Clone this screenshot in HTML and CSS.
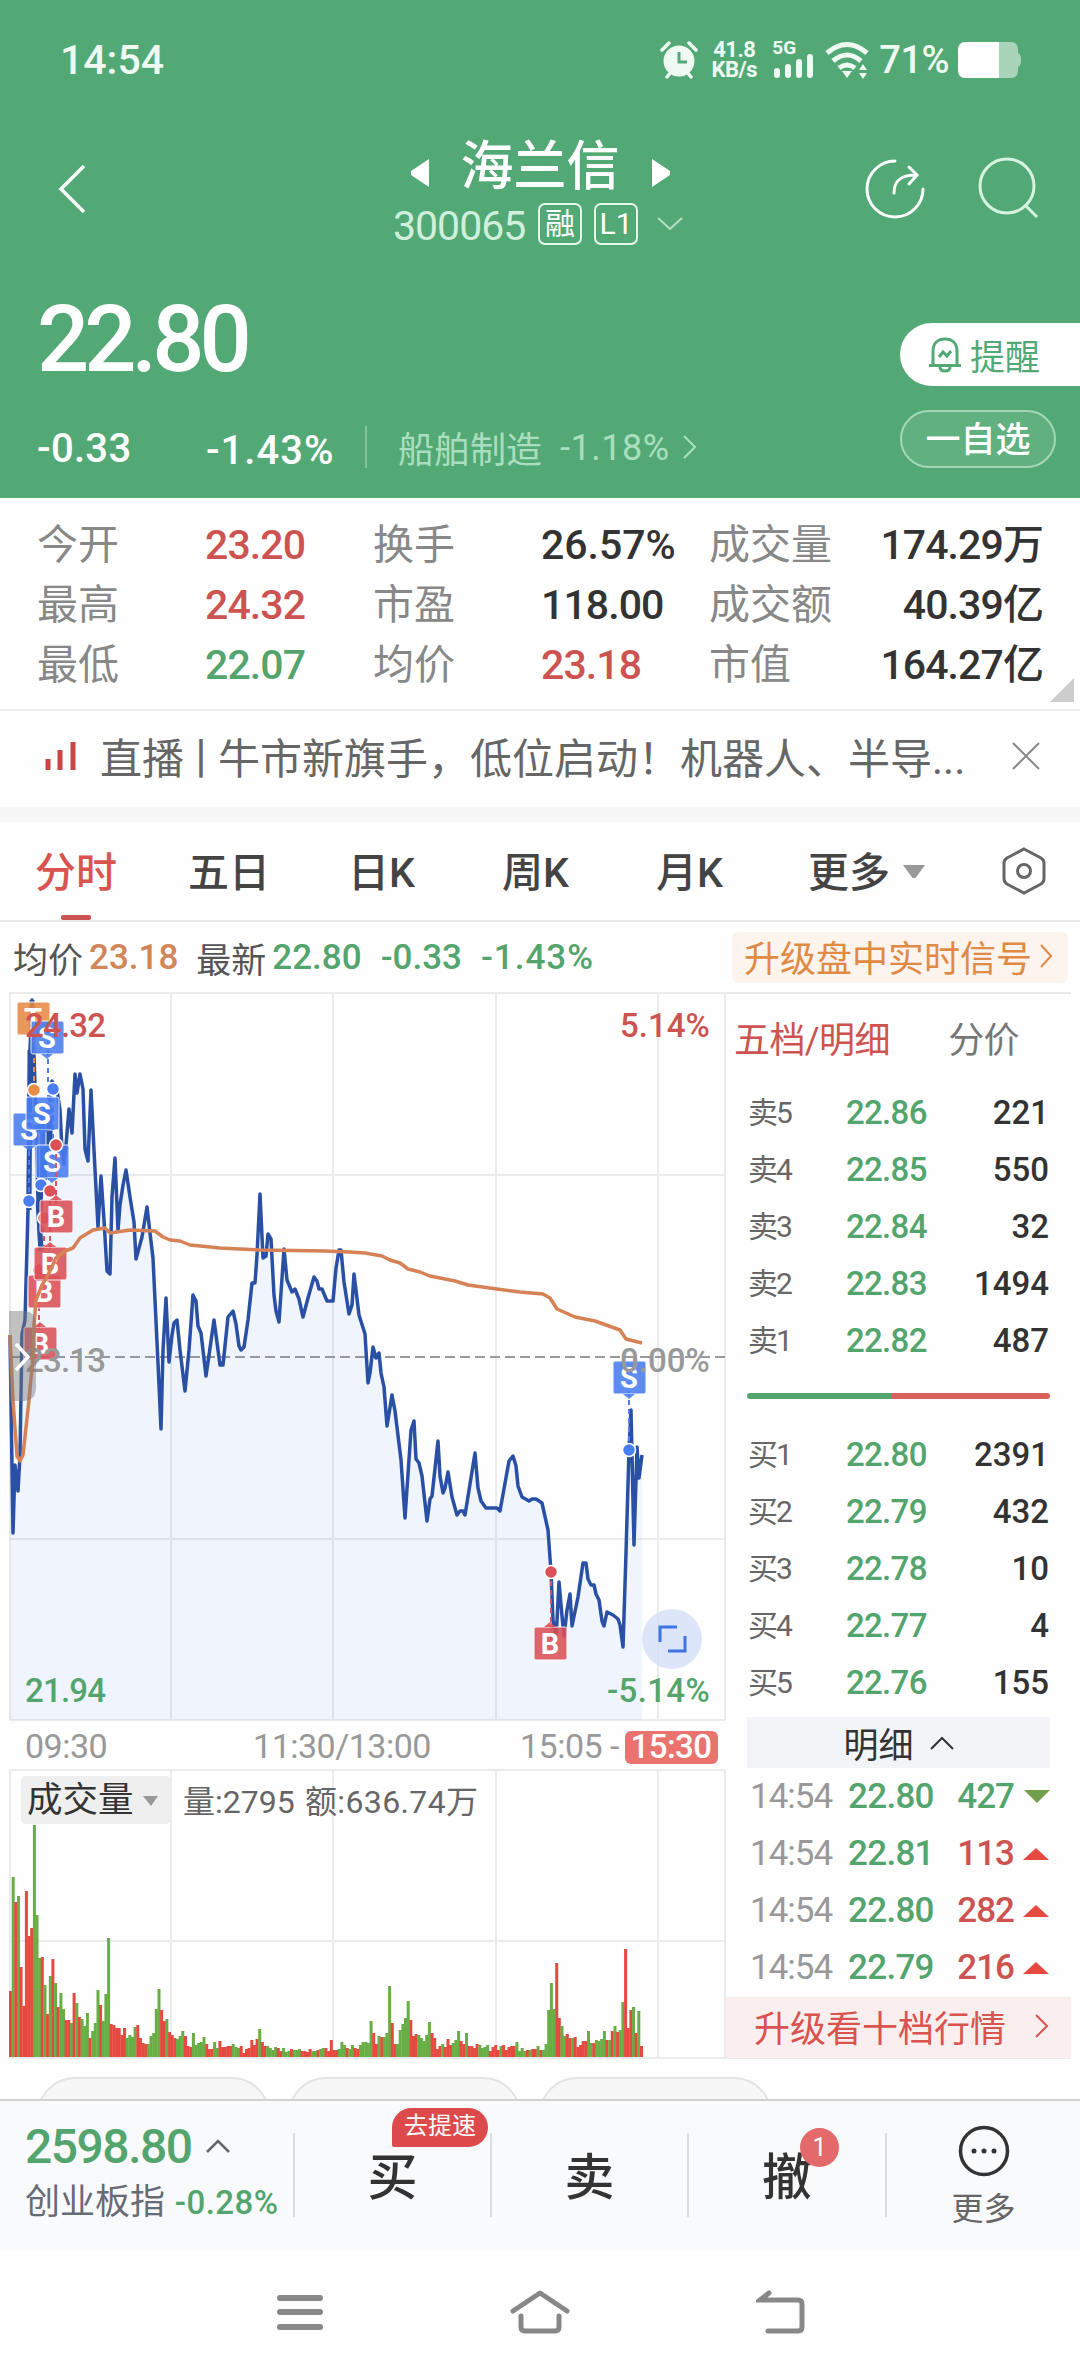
FILE: index.html
```html
<!DOCTYPE html>
<html lang="zh-CN">
<head>
    <meta charset="UTF-8">
    <title>海兰信 300065</title>
    <link rel="stylesheet" href="styles.css">
</head>
<body>
    <header class="header">
        <div class="status">
            <span class="clock">14:54</span>
            <div class="status-right">
                <svg class="alarm" width="38" height="38" viewBox="0 0 38 38">
                    <circle cx="19" cy="20" r="15.5" fill="#eefaf2"/>
                    <path d="M2 9l7-7M36 9l-7-7M7 36l4-5M31 36l-4-5" stroke="#eefaf2" stroke-width="3.5" stroke-linecap="round"/>
                    <path d="M19 11v10h8" fill="none" stroke="#53a975" stroke-width="3"/>
                </svg>
                <div class="speed"><span>41.8</span><span>KB/s</span></div>
                <div class="signal">
                    <span>5G</span>
                    <svg width="42" height="26" viewBox="0 0 42 26" stroke="#eefaf2" stroke-width="6" stroke-linecap="round">
                        <path d="M4 18v4M15 14v8M26 9v13M37 4v18"/>
                    </svg>
                </div>
                <svg class="wifi" width="44" height="38" viewBox="0 0 44 38" fill="none" stroke="#eefaf2" stroke-width="5">
                    <path d="M2 12q20-17 40 0M8 20q14-12 28 0M14 27q8-6 16 0"/>
                    <path d="M17 30h10l-5 7zM34 29l4-6 4 6zM34 32l4 6 4-6z" fill="#eefaf2" stroke="none"/>
                </svg>
                <span class="battery-num">71%</span>
                <svg width="64" height="38" viewBox="0 0 64 38">
                    <path d="M8 1h46q7 0 7 8v3q3 1 3 7t-3 7v3q0 8-7 8H8q-7 0-7-8V9q0-8 7-8z" fill="#a9d4ba"/>
                    <path d="M9 1h33v36H9q-8 0-8-9V10q0-9 8-9z" fill="#fff"/>
                </svg>
            </div>
        </div>

        <div class="title-bar">
            <svg class="back" width="30" height="52" viewBox="0 0 30 52"><path d="M26 3L3 26l23 23" fill="none" stroke="#fff" stroke-width="3.5"/></svg>
            <div class="title">
                <div class="name-row">
                    <svg width="18" height="28"><path d="M18 0v28L0 16v-4z" fill="#fff"/></svg>
                    <h1>海兰信</h1>
                    <svg width="18" height="28"><path d="M0 0v28l18-12v-4z" fill="#fff"/></svg>
                </div>
                <div class="code-row">
                    <span class="code">300065</span>
                    <span class="tag">融</span>
                    <span class="tag">L1</span>
                    <svg width="26" height="14"><path d="M1 1l12 11L25 1" fill="none" stroke="#b4dfc5" stroke-width="2"/></svg>
                </div>
            </div>
            <svg class="share" width="62" height="62" viewBox="0 0 62 62" fill="none" stroke="#fff" stroke-width="3" stroke-linecap="round">
                <path d="M31 3a28 28 0 1 0 28 28M30 35c0-12 6-18 22-18M45 9l8 8-8 9"/>
            </svg>
            <svg class="search" width="64" height="64" viewBox="0 0 64 64" fill="none" stroke="#d5f3e0" stroke-width="3">
                <circle cx="31" cy="30" r="27"/><path d="M50 50l11 11"/>
            </svg>
        </div>

        <div class="quote">
            <div class="quote-left">
                <div class="last">22.80</div>
                <div class="change-row">
                    <span class="chg">-0.33</span>
                    <span class="pct">-1.43%</span>
                    <span class="sector">船舶制造</span>
                    <span class="sector-pct">-1.18%</span>
                    <svg width="14" height="24"><path d="M1 1l11 11L1 23" fill="none" stroke="#a9dfbe" stroke-width="2"/></svg>
                </div>
            </div>
            <div class="quote-right">
                <div class="remind">
                    <svg width="34" height="36" viewBox="0 0 34 36" fill="none" stroke="#53a975" stroke-width="3">
                        <path d="M5 28V14C5 6 10 2 17 2s12 4 12 12v14M1 28.500h32M12 30q0 4 5 4t5-4M11 20l4-5 4 4 4-5"/>
                    </svg>
                    提醒
                </div>
                <div class="self">一自选</div>
            </div>
        </div>
    </header>

    <section class="stats">
        <span class="k">今开</span><span class="red">23.20</span><span class="k">换手</span><span class="wide">26.57%</span><span class="k">成交量</span><span class="r">174.29万</span>
        <span class="k">最高</span><span class="red">24.32</span><span class="k">市盈</span><span>118.00</span><span class="k">成交额</span><span class="r">40.39亿</span>
        <span class="k">最低</span><span class="green">22.07</span><span class="k">均价</span><span class="red">23.18</span><span class="k">市值</span><span class="r">164.27亿</span>
    </section>

    <section class="live">
        <svg width="32" height="30" stroke="#cc4444" stroke-width="5"><path d="M3 18v11M15 9v20M28 1v28"/></svg>
        <p>直播<i>丨</i>牛市新旗手，低位启动！机器人、半导...</p>
        <svg width="28" height="28"><path d="M1 1l26 26M27 1L1 27" stroke="#888" stroke-width="2"/></svg>
    </section>

    <nav class="tabs">
        <span class="active">分时</span>
        <span>五日</span>
        <span>日K</span>
        <span>周K</span>
        <span>月K</span>
        <span>更多<svg width="22" height="14"><path d="M0 0h22L12.500 13h-3z" fill="#999"/></svg></span>
        <svg class="gear" width="44" height="48" viewBox="0 0 44 48" fill="none" stroke="#666" stroke-width="3">
            <path d="M22 2l17 9q3 2 3 5v16q0 3-3 5l-17 9-17-9q-3-2-3-5V16q0-3 3-5z"/><circle cx="22" cy="24" r="6.500"/>
        </svg>
    </nav>

    <section class="info">
        <span>均价</span><b class="orange">23.18</b>
        <span>最新</span><b class="green">22.80</b><b class="green">-0.33</b><b class="green">-1.43%</b>
        <div class="upgrade">升级盘中实时信号<svg width="14" height="24"><path d="M1 1l10 11L1 23" fill="none" stroke="#e08a45" stroke-width="2"/></svg></div>
    </section>

    <main class="board">
        <svg class="chart" width="726" height="1067" viewBox="0 992 726 1067">
            <!-- grid -->
            <g class="grid">
                <path d="M10 1720V993H725V1720zM10 1175H725M10 1539H725M171 993V1720M333 993V1720M496 993V1720M658 993V1720"/>
                <path d="M10 1770H725V2058H10M10 1941H725M171 1770V2058M333 1770V2058M496 1770V2058M658 1770V2058M10 1770V2058"/>
            </g>
            <path class="zero" d="M10 1357H725"/>
            <path id="area" class="area"/>
            <path id="price" class="price"/>
            <path class="spike" d="M30 1050L29 1210M32 1000L33 1085M38 1200L41 1250M43 1120V1160M50 1110V1150"/>
            <g id="volume"></g>

            <g id="marks"></g>
            <text class="scale gray" x="25" y="1372">23.13</text>
            <text class="scale gray" x="709" y="1372" text-anchor="end" textLength="89">0.00%</text>
            <path id="avg" class="avg"/>
            <path class="drawer" d="M9 1311h14q13 0 13 14v62q0 14-13 14H9z"/>
            <path d="M16 1344l12 13-12 13" fill="none" stroke="#fff" stroke-width="3.500"/>

            <text class="scale red" x="25" y="1037">24.32</text>
            <text class="scale red" x="709" y="1037" text-anchor="end" textLength="89">5.14%</text>
            <text class="scale green" x="25" y="1702">21.94</text>
            <circle cx="672" cy="1639" r="30" fill="#d5e0f8" opacity=".8"/>
            <path d="M660 1642v-15h17M685 1636v15h-17" fill="none" stroke="#3e74e6" stroke-width="3"/>
            <text class="scale green" x="709" y="1702" text-anchor="end" textLength="102">-5.14%</text>

            <text class="time" x="25" y="1758">09:30</text>
            <text class="time" x="342" y="1758" text-anchor="middle">11:30/13:00</text>
            <text class="time" x="520" y="1758">15:05</text>
            <text class="time" x="610" y="1758">-</text>
            <rect x="625" y="1731" width="93" height="33" rx="6" fill="#ea7370"/>
            <text class="time end" x="671" y="1758" text-anchor="middle">15:30</text>

            <rect x="21" y="1776" width="150" height="48" rx="5" fill="#efefef"/>
            <text class="vol-name" x="27" y="1812">成交量</text>
            <path d="M143 1796h15l-7 10z" fill="#999"/>
            <text class="vol-text" x="183" y="1813">量:2795</text>
            <text class="vol-text" x="305" y="1813" textLength="173">额:636.74万</text>
        </svg>

        <aside class="depth">
            <div class="depth-tabs"><span class="red">五档/明细</span><span>分价</span></div>
            <div class="rows">
                <div><span>卖5</span><b>22.86</b><em>221</em></div>
                <div><span>卖4</span><b>22.85</b><em>550</em></div>
                <div><span>卖3</span><b>22.84</b><em>32</em></div>
                <div><span>卖2</span><b>22.83</b><em>1494</em></div>
                <div><span>卖1</span><b>22.82</b><em>487</em></div>
            </div>
            <div class="ratio"></div>
            <div class="rows">
                <div><span>买1</span><b>22.80</b><em>2391</em></div>
                <div><span>买2</span><b>22.79</b><em>432</em></div>
                <div><span>买3</span><b>22.78</b><em>10</em></div>
                <div><span>买4</span><b>22.77</b><em>4</em></div>
                <div><span>买5</span><b>22.76</b><em>155</em></div>
            </div>
            <div class="detail-head">明细<svg width="24" height="14"><path d="M1 13L12 2l11 11" fill="none" stroke="#333" stroke-width="2"/></svg></div>
            <div class="trades">
                <div><span>14:54</span><b>22.80</b><em class="green">427</em><i class="down"></i></div>
                <div><span>14:54</span><b>22.81</b><em class="red">113</em><i class="up"></i></div>
                <div><span>14:54</span><b>22.80</b><em class="red">282</em><i class="up"></i></div>
                <div><span>14:54</span><b>22.79</b><em class="red">216</em><i class="up"></i></div>
            </div>
            <div class="ten">升级看十档行情<svg width="14" height="24"><path d="M1 1l11 11L1 23" fill="none" stroke="#d9534f" stroke-width="2"/></svg></div>
        </aside>
    </main>

    <div class="chips"><span></span><span></span><span></span></div>

    <footer class="trade-bar">
        <div class="index">
            <div class="index-val">2598.80<svg width="24" height="14"><path d="M1 13L12 2l11 11" fill="none" stroke="#666" stroke-width="2.500"/></svg></div>
            <div class="index-name">创业板指 <b>-0.28%</b></div>
        </div>
        <div class="act">买<span class="badge-tip">去提速</span></div>
        <div class="act">卖</div>
        <div class="act">撤<span class="badge-num">1</span></div>
        <div class="more">
            <svg width="52" height="52" viewBox="0 0 52 52"><circle cx="26" cy="26" r="23.500" fill="none" stroke="#333" stroke-width="3.500"/><path d="M16 26h.01M26 26h.01M36 26h.01" stroke="#333" stroke-width="5" stroke-linecap="round"/></svg>
            <span>更多</span>
        </div>
    </footer>

    <div class="sys-nav">
        <svg width="46" height="44" stroke="#888" stroke-width="6" stroke-linecap="round"><path d="M3 9h40M3 23h40M3 38h40"/></svg>
        <svg width="60" height="46" fill="none" stroke="#888" stroke-width="5" stroke-linecap="round" stroke-linejoin="round"><path d="M3 22L30 4l27 18M11 27v11q0 4 4 4h30q4 0 4-4V27"/></svg>
        <svg width="50" height="46" fill="none" stroke="#888" stroke-width="5" stroke-linecap="round"><path d="M13 4L4 11h38q4 0 4 4v23q0 4-4 4H12"/></svg>
    </div>

    <script src="chart.js"></script>
</body>
</html>
```
FILE: styles.css
```css
* {
    box-sizing: border-box;
}
body {
    margin: 0;
    width: 1080px;
    height: 2376px;
    overflow: hidden;
    font-family: Roboto, "Noto Sans CJK SC", sans-serif;
    background-color: #fefefe;
    color: #333;
}
svg {
    display: block;
    flex-shrink: 0;
}
b, em, i {
    font-weight: inherit;
    font-style: normal;
}
.red { color: #cd5350; fill: #cd5350; }
.green { color: #53a56d; fill: #53a56d; }
.gray { fill: #999; }
.orange { color: #d08659; }

/* header */
.header {
    height: 498px;
    background-color: #53a975;
    color: #fff;
}
.status {
    display: flex;
    justify-content: space-between;
    height: 120px;
    padding: 0 59px 0 60px;
    align-items: center;
    color: #eefaf2;
}
.clock {
    font-size: 41px;
    font-weight: 500;
}
.status-right {
    display: flex;
    align-items: center;
}
.speed {
    display: flex;
    flex-direction: column;
    width: 50px;
    margin-left: 11px;
    font-size: 22px;
    font-weight: 700;
    line-height: 20px;
    letter-spacing: -.500px;
    text-align: center;
}
.signal {
    position: relative;
    width: 42px;
    height: 38px;
    margin: 0 10px 0 14px;
    padding-top: 12px;
}
.signal span {
    position: absolute;
    left: -1px;
    top: -3px;
    font-size: 19px;
    font-weight: 700;
    line-height: 20px;
}
.battery-num {
    margin: 0 8px 0 10px;
    font-size: 38px;
    font-weight: 500;
    letter-spacing: -.500px;
}
.title-bar {
    display: grid;
    grid-template-columns: 330px 420px 114px 115px 1fr;
    height: 140px;
    align-items: start;
}
.back {
    margin: 43px 0 0 58px;
    grid-column: 1;
}
.title {
    grid-column: 2;
    padding-top: 14px;
}
.share {
    margin-top: 38px;
    grid-column: 4;
}
.search {
    margin-top: 36px;
    margin-left: -3px;
}
.name-row {
    display: flex;
    justify-content: center;
    align-items: center;
    gap: 32px;
    height: 62px;
    padding-top: 15px;
}
.name-row h1 {
    margin: -12px 0 0;
    font-size: 53px;
    font-weight: 500;
    line-height: 60px;
}
.code-row {
    display: flex;
    align-items: center;
    height: 44px;
    margin-top: 6px;
    padding-left: 63px;
}
.code {
    width: 145px;
    padding-top: 3px;
    font-size: 41px;
    letter-spacing: -1px;
    color: #d0efdc;
}
.tag {
    width: 44px;
    height: 42px;
    margin-right: 12px;
    border: 2px solid #e8f7ee;
    border-radius: 7px;
    font-size: 30px;
    line-height: 38px;
    text-align: center;
}
.code-row svg {
    margin-left: 7px;
}
.quote {
    display: flex;
    justify-content: space-between;
}
.quote-left {
    padding-left: 37px;
}
.last {
    height: 156px;
    padding-top: 2px;
    font-size: 92px;
    font-weight: 500;
    letter-spacing: -5px;
    line-height: 156px;
}
.change-row {
    display: flex;
    align-items: center;
    height: 42px;
    margin-top: 10px;
    font-size: 40px;
    font-weight: 500;
}
.chg {
    width: 169px;
    padding-top: 3px;
    line-height: 46px;
    letter-spacing: .300px;
}
.pct {
    width: 161px;
    height: 42px;
    line-height: 49px;
    border-right: 2px solid #86c39c;
    letter-spacing: 1px;
}
.sector {
    width: 162px;
    padding-left: 31px;
    margin-right: 31px;
    font-size: 36px;
    font-weight: 400;
    color: #a9dfbe;
    white-space: nowrap;
}
.sector-pct {
    width: 123px;
    padding-top: 2px;
    font-size: 36px;
    font-weight: 400;
    color: #a9dfbe;
    letter-spacing: .500px;
}
.quote-right {
    width: 180px;
    padding-top: 63px;
}
.remind {
    display: flex;
    align-items: center;
    gap: 8px;
    height: 63px;
    padding-left: 28px;
    border-radius: 32px 0 0 32px;
    background-color: #fff;
    color: #53a975;
    font-size: 35px;
}
.self {
    width: 156px;
    height: 58px;
    margin-top: 24px;
    border: 2px solid #a5d6b8;
    border-radius: 30px;
    background-color: #60b080;
    font-size: 35px;
    font-weight: 500;
    line-height: 57px;
    text-align: center;
}

/* stats */
.stats {
    position: relative;
    display: grid;
    grid-template-columns: 168px 168px 168px 168px 140px 1fr;
    grid-auto-rows: 60px;
    height: 213px;
    padding: 17px 37px 0 37px;
    border-bottom: 2px solid #ececec;
    background-color: #fff;
    font-size: 41px;
    font-weight: 500;
    line-height: 60px;
    white-space: nowrap;
    letter-spacing: -.900px;
}
.stats::after {
    content: "";
    position: absolute;
    right: 6px;
    bottom: 7px;
    border: 12px solid;
    border-color: transparent #ccc #ccc transparent;
}
.stats .k {
    color: #888;
    font-weight: 400;
    letter-spacing: 0;
}
.stats .wide {
    letter-spacing: 0;
}
.stats .r {
    text-align: right;
}
.live {
    display: flex;
    align-items: center;
    height: 111px;
    padding: 0 40px 7px 45px;
    border-bottom: 15px solid #f7f7f7;
    color: #666;
    font-size: 42px;
}
.live p {
    width: 911px;
    margin: 0;
    padding-left: 23px;
    white-space: nowrap;
}
.live p i {
    margin: 0 -4px;
}
.live svg:last-child {
    margin-left: 25px;
}

/* tabs */
.tabs {
    position: relative;
    display: grid;
    grid-template-columns: 153px 160px 154px 154px 152px 194px 44px;
    align-items: center;
    height: 100px;
    padding-left: 35px;
    border-bottom: 2px solid #e8e8e8;
    font-size: 41px;
    font-weight: 500;
    color: #444;
}
.tabs span {
    display: flex;
    align-items: center;
    padding-top: 4px;
    line-height: 92px;
}
.tabs span svg {
    margin-left: 13px;
    margin-top: -3px;
}
.tabs .active {
    position: relative;
    color: #d9534f;
}
.tabs .active::after {
    content: "";
    position: absolute;
    left: 26px;
    bottom: -1px;
    width: 30px;
    height: 5px;
    border-radius: 2px;
    background-color: #cd5350;
}
.info {
    display: flex;
    align-items: center;
    height: 70px;
    padding: 0 12px 0 13px;
    font-size: 35px;
    color: #555;
}
.info b {
    margin-right: 19px;
    font-weight: 500;
}
.info span {
    margin-right: 6px;
}
.info .orange {
    margin-right: 18px;
}
.info b:nth-of-type(4) {
    letter-spacing: 1px;
}
.upgrade {
    display: flex;
    align-items: center;
    justify-content: space-between;
    width: 336px;
    height: 51px;
    margin-left: auto;
    padding: 0 14px 2px 12px;
    border-radius: 6px;
    background-color: #fdf4ee;
    color: #e08a45;
    font-size: 36px;
    white-space: nowrap;
}

/* chart */
.board {
    display: flex;
    height: 1067px;
}
.grid path {
    fill: none;
    stroke: #ebebeb;
    stroke-width: 2;
}
.zero {
    stroke: #999;
    stroke-width: 2;
    stroke-dasharray: 10 5;
}
.area {
    fill: #5a8df0;
    opacity: .09;
}
.price, .spike {
    fill: none;
    stroke: #2950a5;
    stroke-width: 3.500;
    stroke-linejoin: round;
}
.spike {
    stroke-width: 5;
}
.avg {
    fill: none;
    stroke: #d68256;
    stroke-width: 3.500;
    stroke-linejoin: round;
}
.drawer {
    fill: #777;
    opacity: .45;
}
.scale {
    font-size: 33px;
    font-weight: 500;
    letter-spacing: -.800px;
}
.time {
    font-size: 34px;
    letter-spacing: -.500px;
    fill: #999;
}
.time.end {
    fill: #fff;
    font-weight: 500;
    font-size: 33px;
}
.vol-name {
    font-size: 35.500px;
    fill: #333;
}
.vol-text {
    font-size: 32px;
    fill: #666;
}
.mark {
    font-size: 29px;
    font-weight: 700;
    fill: #fff;
    text-anchor: middle;
}

/* order book */
.depth {
    width: 345px;
    border-top: 2px solid #e8e8e8;
    border-bottom: 2px solid #e8e8e8;
}
.depth-tabs {
    display: flex;
    justify-content: space-between;
    height: 90px;
    padding: 2px 52px 0 8px;
    font-size: 36px;
    line-height: 90px;
    color: #777;
    letter-spacing: -.600px;
}
.rows div {
    display: grid;
    grid-template-columns: 98px 100px 1fr;
    align-items: center;
    height: 57px;
    padding: 0 22px;
    font-size: 33px;
    line-height: 57px;
}
.rows span {
    font-size: 30px;
    letter-spacing: -2px;
    color: #666;
}
.rows b, .trades b {
    font-weight: 500;
    color: #53a56d;
    letter-spacing: -.700px;
}
.rows em {
    text-align: right;
    font-weight: 500;
    color: #333;
}
.ratio {
    height: 6px;
    margin: 24px 21px 27px;
    border-radius: 3px;
    background: linear-gradient(to right, #53a56d 48%, #db5f5a 48%);
}
.detail-head {
    display: flex;
    align-items: center;
    justify-content: center;
    gap: 16px;
    height: 51px;
    margin: 6px 21px 0;
    background-color: #f3f4f8;
    font-size: 35px;
}
.trades {
    height: 229px;
}
.trades div {
    display: grid;
    grid-template-columns: 98px 105px 62px 1fr;
    align-items: center;
    height: 57px;
    padding: 0 21px 0 24px;
    font-size: 35px;
    line-height: 57px;
    letter-spacing: -1px;
}
.trades span {
    color: #999;
}
.trades em {
    text-align: right;
    padding-right: 1px;
    font-weight: 500;
}
.trades i {
    justify-self: end;
    border: 13px solid transparent;
}
.trades .up {
    margin-right: 1px;
    border-top-width: 0;
    border-bottom: 12px solid #e5493f;
}
.trades .down {
    border-bottom-width: 0;
    border-top: 13px solid #719f4c;
}
.ten {
    display: flex;
    align-items: center;
    justify-content: space-between;
    height: 61px;
    padding: 0 22px 4px 28px;
    background-color: #fbeeee;
    color: #d9534f;
    font-size: 36px;
}
.chips {
    display: flex;
    gap: 18px;
    height: 40px;
    padding: 18px 37px 0;
    overflow: hidden;
}
.chips span {
    width: 233px;
    height: 76px;
    flex-shrink: 0;
    border: 2px solid #e3e3e3;
    border-radius: 38px;
    background-color: #f7f7f7;
}

/* bottom trade bar */
.trade-bar {
    display: grid;
    grid-template-columns: 295px 197px 197px 198px 1fr;
    grid-template-rows: 84px;
    height: 151px;
    padding-top: 32px;
    border-top: 2px solid #d2d2d2;
    background-color: #f9fafc;
}
.index {
    padding-left: 25px;
    border-right: 2px solid #dcdcdf;
    white-space: nowrap;
}
.index-val {
    display: flex;
    align-items: center;
    gap: 14px;
    height: 26px;
    font-size: 48px;
    letter-spacing: -1.500px;
    font-weight: 500;
    color: #53a56d;
}
.index-name {
    margin-top: 18px;
    font-size: 35px;
    line-height: 52px;
    color: #666b75;
}
.index-name b {
    font-size: 33px;
    font-weight: 500;
    margin-left: 1px;
    letter-spacing: .500px;
    color: #53a56d;
}
.act {
    position: relative;
    border-right: 2px solid #dcdcdf;
    font-size: 50px;
    font-weight: 500;
    line-height: 90px;
    text-align: center;
}
.badge-tip {
    position: absolute;
    left: 97px;
    top: -25px;
    width: 96px;
    height: 39px;
    border-radius: 20px 20px 20px 2px;
    background-color: #dd4a4c;
    color: #fff;
    font-size: 24px;
    font-weight: 400;
    line-height: 37px;
}
.badge-num {
    position: absolute;
    left: 111px;
    top: -5px;
    width: 39px;
    height: 39px;
    border-radius: 50%;
    background-color: #e4696b;
    color: #fff;
    font-size: 25px;
    font-weight: 400;
    line-height: 39px;
}
.more {
    display: flex;
    flex-direction: column;
    align-items: center;
    margin-top: -8px;
    font-size: 32px;
    line-height: 46px;
    color: #666;
}
.more span {
    margin-top: 9px;
}
.sys-nav {
    display: flex;
    justify-content: space-between;
    padding: 39px 274px 0 277px;
}
```
FILE: chart.js
```javascript
const price = [
    10,1335, 13,1533, 15,1465, 18,1491, 20,1455, 22,1334, 25,1320, 28,1210, 30,1050, 32,1000, 35,1085, 38,1200, 40,1250,
    43,1120, 45,1180, 47,1130, 50,1100, 52,1081, 57,1090, 60,1110, 62,1150, 64,1164, 66,1145, 69,1109, 72,1133, 75,1074,
    77,1093, 80,1074, 83,1089, 85,1149, 88,1161, 91,1090, 94,1150, 98,1227, 101,1176, 104,1220, 107,1271, 110,1274,
    112,1197, 115,1158, 118,1230, 120,1205, 123,1185, 126,1170, 130,1197, 134,1222, 136,1259, 142,1237, 147,1207,
    150,1233, 153,1258, 158,1363, 161,1429, 163,1350, 166,1298, 169,1362, 172,1335, 174,1323, 177,1320, 180,1350,
    185,1391, 189,1350, 193,1295, 196,1301, 198,1326, 201,1333, 206,1376, 214,1320, 220,1365, 223,1365, 228,1317,
    233,1311, 236,1324, 239,1346, 241,1350, 244,1347, 248,1320, 252,1283, 255,1283, 257,1255, 260,1194, 263,1258,
    266,1256, 268,1234, 271,1239, 274,1295, 276,1311, 279,1322, 284,1249, 287,1280, 292,1292, 295,1289, 299,1299,
    303,1317, 308,1298, 314,1277, 317,1281, 319,1289, 322,1289, 327,1301, 333,1301, 336,1268, 339,1250, 341,1250,
    344,1282, 349,1314, 352,1305, 354,1274, 359,1315, 365,1334, 368,1383, 370,1373, 373,1347, 376,1358, 379,1353,
    381,1373, 384,1387, 387,1426, 392,1395, 395,1411, 401,1460, 405,1518, 411,1430, 414,1421, 416,1459, 419,1463,
    422,1476, 427,1521, 430,1499, 432,1496, 438,1441, 440,1476, 443,1493, 445,1488, 448,1472, 452,1497, 457,1515,
    460,1511, 463,1511, 465,1515, 475,1453, 478,1488, 481,1501, 486,1508, 497,1508, 500,1511, 509,1461, 513,1456,
    516,1466, 518,1486, 522,1497, 529,1501, 532,1499, 536,1499, 542,1503, 548,1530, 551,1572, 553,1620, 556,1640,
    559,1582, 562,1616, 564,1636, 567,1610, 570,1594, 572,1626, 578,1597, 583,1563, 586,1563, 588,1579, 591,1585,
    594,1585, 596,1594, 599,1600, 602,1621, 604,1626, 607,1612, 613,1615, 618,1619, 620,1625, 623,1647, 626,1553,
    629,1450, 631,1410, 634,1545, 637,1447, 639,1478, 642,1455
];

const avg = [
    10,1335, 13,1400, 17,1456, 20,1461, 23,1455, 29,1400, 33,1357, 34,1325, 36,1300, 42,1285, 48,1275, 56,1258, 65,1251,
    73,1248, 80,1238, 93,1230, 105,1228, 110,1233, 130,1230, 155,1231, 163,1237, 170,1240, 180,1241, 190,1245, 220,1248,
    240,1249, 260,1250, 325,1251, 350,1252, 365,1253, 382,1256, 390,1260, 400,1263, 408,1269, 420,1272, 430,1276,
    455,1281, 468,1285, 497,1289, 520,1292, 543,1294, 550,1298, 557,1309, 575,1317, 595,1321, 620,1330, 626,1339, 642,1343
];

// one bar a minute, R = up, G = down
const volume = `R66 G180 R155 G161 R90 R51 R166 R121 R129 G232 G142 G99 R100 G72 R43 G81 R98 G74 R50 G64 G48 R37 R37 G34
R64 G54 R40 G38 G31 G44 R19 G26 G34 G67 R52 G36 G63 G119 R33 R32 R29 R29 R22 R29 G19 G22 G20 G30 R32 R19 R14 R13 G13 G21
G24 G48 G68 R47 R36 G38 R25 R22 R19 G18 G21 G26 R21 R11 R10 G24 G12 G14 G15 G20 R13 R8 R8 G15 G9 R16 R10 R10 R11 R11 G13
G10 G9 R11 R4 R8 R9 R17 R12 R18 G28 R15 R11 G11 G9 G7 G10 R9 R6 G9 G5 G6 R8 G7 G7 G8 R6 R6 R5 R8 G6 G6 R7 G8 G9 R9 R6 R17
R7 R7 G8 G15 G12 R9 G8 G12 R9 R8 G12 G15 G15 G14 G36 R24 R13 G21 R20 G20 G24 G71 R34 R13 G13 G27 G33 G39 G56 R37 R21 R23
G22 G19 G16 G22 G35 R24 R19 R8 R11 G13 R10 R18 R12 G14 G17 G26 R16 R13 G24 R11 R11 R9 R13 G12 G9 G10 G12 R6 R10 R12 R7
G11 R12 R7 R10 R11 R11 G15 G6 G9 G6 R7 G7 R8 R8 G11 R7 G7 G13 G47 G74 G48 R94 R39 G31 G21 R23 R19 G19 R20 R10 R12 R16
R16 G26 G14 R14 G17 G16 G18 G26 R17 G17 R26 G31 R25 G27 G55 R108 R29 R47 G50 R24 G46 R11`.split(/\s+/);

const colors = { S: '#4a7df0', B: '#dc5158', T: '#e88b46' };

// letter, box left, box top, dot x, dot y
const marks = [
    ['T', 17, 1002, 34, 1090],
    ['S', 31, 1021, 48, 1109],
    ['S', 13, 1113, 29, 1201],
    ['S', 26, 1097, 41, 1185],
    ['S', 36, 1145, 53, 1089],
    ['B', 24, 1327, 39, 1270],
    ['B', 28, 1275, 44, 1218],
    ['B', 34, 1247, 50, 1191],
    ['B', 40, 1200, 56, 1145],
    ['S', 613, 1361, 629, 1450],
    ['B', 534, 1627, 551, 1572]
];

function toPath(list) {
    let d = '';
    for (let i = 0; i < list.length; i += 2) {
        d += (i ? 'L' : 'M') + list[i] + ' ' + list[i + 1];
    }
    return d;
}

document.getElementById('price').setAttribute('d', toPath(price));
document.getElementById('area').setAttribute('d', toPath(price) + 'V1720H10Z');
document.getElementById('avg').setAttribute('d', toPath(avg));

const step = 631 / (volume.length - 1);
document.getElementById('volume').innerHTML = volume.map((v, i) => {
    const h = +v.slice(1);
    const color = v[0] === 'R' ? '#e5493f' : '#69ad45';
    return `<rect x="${(9 + i * step).toFixed(1)}" y="${2057 - h}" width="3" height="${h}" fill="${color}"/>`;
}).join('');

document.getElementById('marks').innerHTML = marks.map(([t, x, y, dx, dy]) => {
    const c = colors[t];
    const cx = x + 16;
    const tip = t === 'B' ? `M${cx - 6} ${y}l6 -5 6 5z` : `M${cx - 6} ${y + 33}l6 5 6 -5z`;
    return `
        <path d="M${dx} ${dy}V${y + 16}" stroke="${c}" stroke-width="2" stroke-dasharray="5 4"/>
        <g opacity=".88">
            <rect x="${x}" y="${y}" width="33" height="33" rx="2" fill="${c}" stroke="#fff" stroke-width="1"/>
            <path d="${tip}" fill="${c}"/>
        </g>
        <text class="mark" x="${cx}" y="${y + 27}">${t}</text>
        <circle cx="${dx}" cy="${dy}" r="6.5" fill="${c}" stroke="#fff" stroke-width="1.5"/>`;
}).join('');
```
